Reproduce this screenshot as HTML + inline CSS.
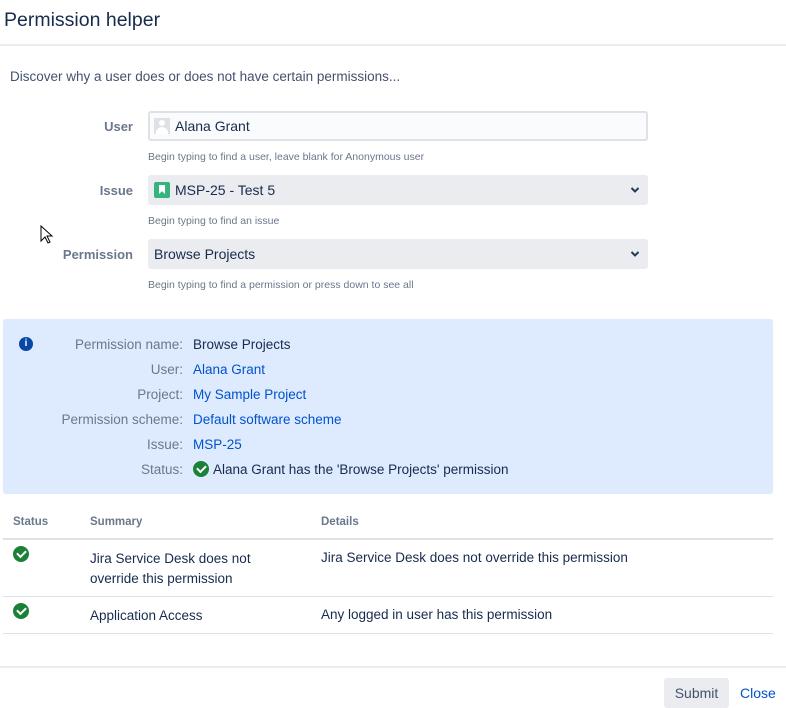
<!DOCTYPE html>
<html><head><meta charset="utf-8"><style>
*{margin:0;padding:0;box-sizing:border-box}
body{width:786px;height:708px;background:#fff;font-family:"Liberation Sans",sans-serif;color:#172b4d;position:relative;overflow:hidden;font-size:14px}
.a{position:absolute;white-space:nowrap}
.lbl{position:absolute;right:653px;font-size:13px;font-weight:bold;color:#6b778c;line-height:16px}
.field{position:absolute;left:148px;width:500px;height:30px;border-radius:3px;background:#ebecf0;font-size:14px;line-height:31px;padding-left:6px}
.help{position:absolute;left:148px;font-size:10.5px;color:#6b778c;line-height:14px}
.chev{position:absolute;right:8px;top:11px}
.il{position:absolute;right:603px;font-size:13.5px;color:#6b778c;line-height:16px}
.iv{position:absolute;left:193px;font-size:13.5px;line-height:16px;color:#172b4d}
.lnk{color:#0052cc}
.ok{display:inline-block;width:16px;height:16px;border-radius:50%;background:#1b8138;position:relative}
.ok:after{content:"";position:absolute;left:4px;top:4px;width:7px;height:4px;border-left:2px solid #fff;border-bottom:2px solid #fff;transform:rotate(-45deg)}
.th{position:absolute;top:516px;font-size:11.5px;font-weight:bold;color:#6b778c}
.td{position:absolute;font-size:13.5px;line-height:20px}
.hl{position:absolute;left:3px;width:770px;background:#dfe1e6}
</style></head><body>
<div class="a" style="left:4px;top:9px;font-size:19.5px;color:#172b4d">Permission helper</div>
<div class="a" style="left:0;top:44px;width:786px;height:2px;background:#ebecf0"></div>
<div class="a" style="left:10px;top:69px;font-size:13.5px;color:#42526e">Discover why a user does or does not have certain permissions...</div>

<div class="lbl" style="top:119px">User</div>
<div class="field" style="top:111px;background:#fafbfc;border:2px solid #dfe1e6;line-height:27px;padding-left:4px">
<span style="display:inline-block;width:16px;height:16px;background:#dfe1e6;vertical-align:-3px;margin-right:5px;position:relative;overflow:hidden"><span style="position:absolute;left:5px;top:2px;width:6px;height:6px;border-radius:50%;background:#fff"></span><span style="position:absolute;left:2px;top:9px;width:12px;height:10px;border-radius:6px 6px 0 0;background:#fff"></span></span>Alana Grant</div>
<div class="help" style="top:150px">Begin typing to find a user, leave blank for Anonymous user</div>

<div class="lbl" style="top:183px">Issue</div>
<div class="field" style="top:175px"><span style="display:inline-block;width:16px;height:16px;background:#36b37e;border-radius:2px;vertical-align:-3px;margin-right:5px;position:relative"><span style="position:absolute;left:5px;top:3px;width:6px;height:9px;background:#fff;clip-path:polygon(0 0,100% 0,100% 100%,50% 70%,0 100%)"></span></span>MSP-25 - Test 5
<svg class="chev" width="10" height="8" viewBox="0 0 10 8"><path d="M1.5 2l3.5 3.5L8.5 2" stroke="#253858" stroke-width="2" fill="none"/></svg></div>
<div class="help" style="top:214px">Begin typing to find an issue</div>

<div class="lbl" style="top:247px">Permission</div>
<div class="field" style="top:239px">Browse Projects
<svg class="chev" width="10" height="8" viewBox="0 0 10 8"><path d="M1.5 2l3.5 3.5L8.5 2" stroke="#253858" stroke-width="2" fill="none"/></svg></div>
<div class="help" style="top:278px">Begin typing to find a permission or press down to see all</div>

<svg class="a" style="left:40px;top:225px" width="14" height="20" viewBox="0 0 14 20"><path d="M1 1v15l4-4 3 6 2-1-3-6h5z" fill="#fff" stroke="#000" stroke-width="1"/></svg>

<div class="a" style="left:3px;top:319px;width:770px;height:175px;background:#deebff;border-radius:3px"></div>
<div class="a" style="left:19px;top:337px;width:14px;height:14px;border-radius:50%;background:#0747a6;color:#fff;font-size:10px;font-weight:bold;text-align:center;line-height:14px">i</div>
<div class="il" style="top:337px">Permission name:</div><div class="iv" style="top:337px">Browse Projects</div>
<div class="il" style="top:362px">User:</div><div class="iv lnk" style="top:362px">Alana Grant</div>
<div class="il" style="top:387px">Project:</div><div class="iv lnk" style="top:387px">My Sample Project</div>
<div class="il" style="top:412px">Permission scheme:</div><div class="iv lnk" style="top:412px">Default software scheme</div>
<div class="il" style="top:437px">Issue:</div><div class="iv lnk" style="top:437px">MSP-25</div>
<div class="il" style="top:462px">Status:</div><div class="iv" style="top:461px"><span class="ok" style="vertical-align:-3px;margin-right:4px"></span>Alana Grant has the 'Browse Projects' permission</div>

<div class="th" style="left:13px">Status</div>
<div class="th" style="left:90px">Summary</div>
<div class="th" style="left:321px">Details</div>
<div class="hl" style="top:538px;height:2px"></div>
<div class="a" style="left:13px;top:546px"><span class="ok"></span></div>
<div class="td" style="left:90px;top:549px">Jira Service Desk does not<br>override this permission</div>
<div class="td" style="left:321px;top:548px">Jira Service Desk does not override this permission</div>
<div class="hl" style="top:596px;height:1px"></div>
<div class="a" style="left:13px;top:603px"><span class="ok"></span></div>
<div class="td" style="left:90px;top:606px">Application Access</div>
<div class="td" style="left:321px;top:605px">Any logged in user has this permission</div>
<div class="hl" style="top:633px;height:1px"></div>

<div class="a" style="left:0;top:666px;width:786px;height:2px;background:#ebecf0"></div>
<div class="a" style="left:664px;top:678px;width:65px;height:30px;background:#ebecf0;border-radius:3px;font-size:14px;line-height:30px;text-align:center;color:#42526e">Submit</div>
<div class="a" style="left:740px;top:685px;font-size:14px;color:#0052cc">Close</div>
</body></html>
